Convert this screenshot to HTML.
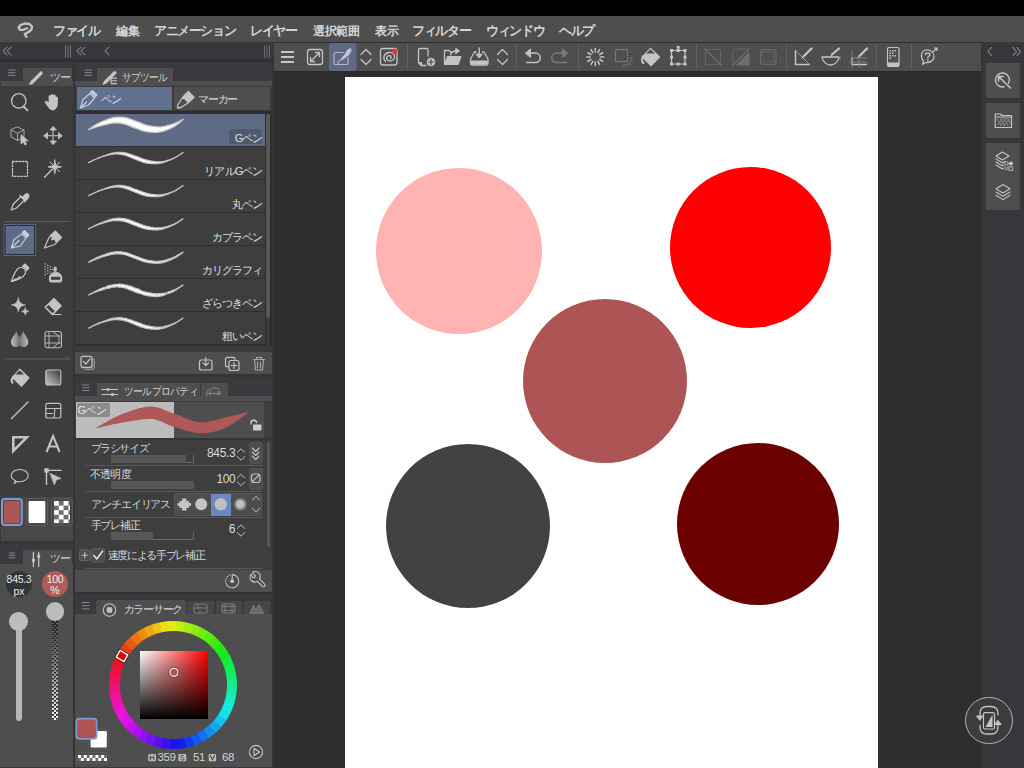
<!DOCTYPE html>
<html><head><meta charset="utf-8">
<style>
*{box-sizing:border-box;margin:0;padding:0}
html,body{width:1024px;height:768px;overflow:hidden;background:#2e2e2e;font-family:"Liberation Sans",sans-serif;color:#d4d4d4}
.a{position:absolute}
.t{position:absolute;white-space:nowrap;line-height:1}
.m{font-weight:bold}
svg{position:absolute;overflow:visible}
</style></head><body>
<!-- top black status -->
<div class="a" style="left:0;top:0;width:1024px;height:16px;background:#000"></div>
<!-- menubar -->
<div class="a" style="left:0;top:16px;width:1024px;height:26px;background:#4e4e4e"></div>
<!-- left column gutter -->
<div class="a" style="left:0;top:42px;width:274px;height:726px;background:#353538"></div><div class="a" style="left:0;top:42px;width:274px;height:17px;background:#38383c"></div>
<!-- toolbar -->
<div class="a" style="left:274px;top:43px;width:707px;height:28px;background:#4e4e4e"></div>
<!-- canvas area -->
<div class="a" style="left:274px;top:71px;width:707px;height:697px;background:#2e2e2e"></div><div class="a" style="left:272px;top:59px;width:2px;height:709px;background:#333337"></div><div class="a" style="left:274px;top:71px;width:707px;height:1px;background:#2a2a2a"></div>
<!-- right strip -->
<div class="a" style="left:981px;top:42px;width:43px;height:726px;background:#37363a"></div><div class="a" style="left:980px;top:71px;width:1px;height:697px;background:#2a2a2a"></div>
<!-- white canvas -->
<div class="a" style="left:345px;top:77px;width:533px;height:691px;background:#fff"></div>
<!-- circles -->
<div class="a" style="left:376px;top:168px;width:166px;height:166px;border-radius:50%;background:#ffb3b3"></div>
<div class="a" style="left:670px;top:167px;width:161px;height:161px;border-radius:50%;background:#ff0000"></div>
<div class="a" style="left:523px;top:299px;width:164px;height:164px;border-radius:50%;background:#ad5555"></div>
<div class="a" style="left:386px;top:444px;width:164px;height:164px;border-radius:50%;background:#424242"></div>
<div class="a" style="left:677px;top:443px;width:162px;height:162px;border-radius:50%;background:#6b0000"></div>


<!-- MENU -->
<svg class="a" style="left:0;top:0" width="1024" height="768" viewBox="0 0 1024 768">
<path d="M26.5,36.8 L24.7,34 L28.5,32 L31.5,29.5 L32,26.5 L29.5,24 L25,23.5 L20.5,25 L18.5,27.5 L20,29.8 L23.5,29.8 L27,28.2" fill="none" stroke="#c6c6c6" stroke-width="2.3" stroke-linecap="round" stroke-linejoin="round"/>
</svg>
<div class="t m" style="left:53px;top:25px;font-size:12.5px;letter-spacing:-1.3px">ファイル</div>
<div class="t m" style="left:116px;top:25px;font-size:12px;letter-spacing:-0.1px">編集</div>
<div class="t m" style="left:154px;top:25px;font-size:12.5px;letter-spacing:-1.4px">アニメーション</div>
<div class="t m" style="left:250px;top:25px;font-size:12.5px;letter-spacing:-1.3px">レイヤー</div>
<div class="t m" style="left:313px;top:25px;font-size:12px;letter-spacing:-0.5px">選択範囲</div>
<div class="t m" style="left:375px;top:25px;font-size:12px;letter-spacing:-0.5px">表示</div>
<div class="t m" style="left:412px;top:25px;font-size:12.5px;letter-spacing:-1.3px">フィルター</div>
<div class="t m" style="left:486px;top:25px;font-size:12.5px;letter-spacing:-1.3px">ウィンドウ</div>
<div class="t m" style="left:559px;top:25px;font-size:12.5px;letter-spacing:-1.3px">ヘルプ</div>


<!-- TOOLBAR ICONS -->
<svg class="a" style="left:0;top:0" width="1024" height="768" viewBox="0 0 1024 768" fill="none" stroke="#c4c4c4" stroke-width="1.4" stroke-linecap="round" stroke-linejoin="round">
<!-- header row left -->
<path d="M7,47 L3,51 L7,55 M11,47 L7,51 L11,55" stroke="#76767a" stroke-width="1.1"/>
<path d="M65.5,46 V57 M68,46 V57 M70.5,46 V57" stroke="#76767a" stroke-width="1"/>
<path d="M81,47 L77,51 L81,55 M85,47 L81,51 L85,55" stroke="#76767a" stroke-width="1.1"/>
<path d="M109,47 L105,51 L109,55" stroke="#76767a" stroke-width="1.1"/>
<path d="M264.5,46 V57 M267,46 V57 M269.5,46 V57" stroke="#6e6e72" stroke-width="1"/>
<!-- hamburger -->
<path d="M281,52 H294 M281,57 H294 M281,62 H294" stroke-width="2" stroke-linecap="butt"/>
<!-- expand -->
<rect x="307.5" y="49.5" width="15" height="15" rx="2.5" stroke-width="1.3"/>
<path d="M310.5,61.5 L319.5,52.5 M315.5,52.5 H319.5 V56.5 M310.5,57.5 V61.5 H314.5" stroke-width="1.3"/>
<!-- selected -->
<rect x="329" y="43" width="27.5" height="28" rx="3" fill="#5f6a87" stroke="none"/>
<path d="M343.5,52.5 H335.5 A1.5,1.5 0 0 0 334,54 V63 A1.5,1.5 0 0 0 335.5,64.5 H346.5 A1.5,1.5 0 0 0 348,63 V57.5" stroke-width="1.2" stroke="#b4b8c4"/>
<path d="M339.8,60.8 C341,58.5 343.2,56 344.6,54.5 C345.5,51.5 347.8,48.8 350.3,48.3 C351.6,48.3 351.8,49.8 351.2,51.5 C350.2,54 347.8,56.2 346,57.2 C344.2,58.8 342,60.3 339.8,60.8 Z" fill="#c4c6cc" stroke="none"/>
<path d="M340.2,60.5 C338.2,60.8 337.2,62.5 338.6,63.6" stroke="#b4b8c4" stroke-width="1.1"/>
<!-- up/down -->
<path d="M361,54.5 L366,49.5 L371,54.5 M361,59.5 L366,64.5 L371,59.5" stroke-width="1.3"/>
<path d="M497.5,54.5 L502.5,49.5 L507.5,54.5 M497.5,59.5 L502.5,64.5 L507.5,59.5" stroke-width="1.3"/>
<!-- spiral -->
<rect x="380.5" y="48.5" width="16.5" height="16.5" rx="2.5" stroke-width="1.3"/>
<path d="M385.5,61.5 C382.5,58.5 383.5,53.5 388.5,52.5 C392.5,51.8 395.5,54.5 394.5,57.8 C393.5,61 389,62 387,59.5 C385.8,57.8 387.3,55.5 389.7,55.7 C391.3,55.9 391.6,57.6 390.6,58.4" stroke-width="1.3"/>
<circle cx="394.6" cy="51" r="2.6" fill="#ee3333" stroke="none"/>
<!-- separators -->
<path d="M407.5,44 V70 M516.5,44 V70 M578.5,44 V70 M696.5,44 V70 M786.5,44 V70 M876.5,44 V70 M911.5,44 V70" stroke="#625c5c" stroke-width="1" stroke-linecap="butt"/>
<!-- new doc -->
<path d="M428,56 V50 A1.5,1.5 0 0 0 426.5,48.5 H420 A1.5,1.5 0 0 0 418.5,50 V62.5 L421.5,65.5 H426" stroke-width="1.3"/>
<path d="M418.5,62.5 H421.5 V65.5 Z" fill="#c4c4c4" stroke-width="1"/>
<circle cx="431" cy="62" r="4.3" fill="#c4c4c4" stroke="none"/>
<path d="M431,59.3 V64.7 M428.3,62 H433.7" stroke="#4e4e4e" stroke-width="1.2"/>
<!-- open folder -->
<path d="M444.5,64.5 V50.5 H449 L450.5,52 H452" stroke-width="1.3"/>
<path d="M444.5,64.5 L447.5,56.5 H461 L458,64.5 Z" fill="#c4c4c4" stroke-width="1.1"/>
<path d="M450.5,55 C451,51.5 453.5,51 457,51" stroke-width="1.3"/>
<path d="M456,48.5 L459.5,51 L456,53.5 Z" fill="#c4c4c4" stroke-width="1"/>
<!-- save -->
<path d="M474.5,52 L470.5,59 V63.5 A1.5,1.5 0 0 0 472,65 H486.5 A1.5,1.5 0 0 0 488,63.5 V59 L484,52 H482.5" stroke-width="1.3"/>
<path d="M476,52 H474.5" stroke-width="1.3"/>
<rect x="471" y="60.5" width="16.5" height="4" fill="#c4c4c4" stroke="none"/>
<path d="M479.2,48 V56.5" stroke-width="1.4"/>
<path d="M476.2,54.5 L479.2,58 L482.2,54.5 Z" fill="#c4c4c4" stroke-width="1"/>
<!-- undo -->
<path d="M528.5,53 H535.5 A4.8,4.8 0 0 1 535.5,62.6 H526.5" stroke-width="1.5"/>
<path d="M525.5,53 L530.5,49 V57 Z" fill="#c4c4c4" stroke-width="1"/>
<!-- redo -->
<path d="M563.5,53 H556.5 A4.8,4.8 0 0 0 556.5,62.6 H566.5" stroke="#7c7c7c" stroke-width="1.5"/>
<path d="M567.5,53 L562.5,49 V57 Z" fill="#7c7c7c" stroke="#7c7c7c" stroke-width="1"/>
<!-- spinner -->
<g stroke-width="1.5" transform="translate(595.3,57)">
<path d="M0,-5 V-8.5 M0,5 V8.5 M-5,0 H-8.5 M5,0 H8.5 M2.5,-4.33 L4.25,-7.36 M-2.5,4.33 L-4.25,7.36 M4.33,-2.5 L7.36,-4.25 M-4.33,2.5 L-7.36,4.25 M2.5,4.33 L4.25,7.36 M-2.5,-4.33 L-4.25,-7.36 M4.33,2.5 L7.36,4.25 M-4.33,-2.5 L-7.36,-4.25"/>
</g>
<!-- dotted selection -->
<rect x="615.5" y="49.5" width="12" height="12" rx="1" stroke="#7a7a7a" stroke-width="1.3" stroke-dasharray="1.5 1.5"/>
<g stroke="#7a7a7a" stroke-width="1.2" transform="translate(627,61)">
<path d="M0,3 V5 M3,0 H5 M2.1,2.1 L3.5,3.5 M-2.5,3.5 L-3.5,5 M3.5,-2.5 L5,-3.5"/>
</g>
<!-- fill bucket -->
<path d="M650.5,48.5 L659.5,57 L651,65.5 L642.5,57 Z" fill="#c4c4c4" stroke="#c4c4c4" stroke-width="1.5"/>
<path d="M646,53.5 L650.5,49.3 L655,53.5 Z" fill="#4e4e4e" stroke="none"/>
<path d="M643.5,56 C641.5,58 641.5,62 643.5,63" stroke-width="2"/>
<!-- transform -->
<rect x="671.5" y="50.5" width="13.5" height="13.5" stroke-width="1.2"/>
<path d="M678.2,50.5 V47" stroke-width="1.2"/>
<g fill="#c4c4c4" stroke="none">
<rect x="670" y="49" width="3" height="3"/><rect x="683.5" y="49" width="3" height="3"/><rect x="670" y="62.5" width="3" height="3"/><rect x="683.5" y="62.5" width="3" height="3"/>
<rect x="676.7" y="62.5" width="3" height="3"/><rect x="670" y="55.7" width="3" height="3"/><rect x="683.5" y="55.7" width="3" height="3"/><rect x="676.7" y="49" width="3" height="3"/><rect x="676.7" y="46" width="3" height="2.5"/>
</g>
<!-- diag dotted -->
<rect x="705.5" y="49.5" width="15" height="15" stroke="#6e6e6e" stroke-width="1.2" stroke-dasharray="1.5 1.8"/>
<path d="M704.5,48.5 L721,65" stroke="#6e6e6e" stroke-width="1.2"/>
<!-- tri dotted -->
<path d="M733,65 V49 H749" stroke="#6e6e6e" stroke-width="1.2" stroke-dasharray="1.5 1.8"/>
<path d="M749,49 L733,65 M749,53 V65 H737 Z" fill="#6e6e6e" stroke="#6e6e6e" stroke-width="1.1"/>
<!-- rounded dotted rect -->
<rect x="760.5" y="49.5" width="15.5" height="15" rx="3" stroke="#6a6a6a" stroke-width="1.2"/>
<rect x="763" y="52" width="10.5" height="10" stroke="#6a6a6a" stroke-width="1" stroke-dasharray="1 1.5"/>
<!-- ruler 1 -->
<path d="M795.5,50.5 V64.5 H809" stroke-width="1.5"/>
<path d="M795.5,50.5 L809,64" stroke="#9a9a9a" stroke-width="1"/>
<path d="M803.5,56.5 L811.5,48.5" stroke-width="2.3"/>
<path d="M801.5,58.5 L803.5,56.5" stroke-width="1"/>
<!-- ruler 2 -->
<path d="M822,57 H839 C838.5,62 834,65 830.5,65 C827,65 822.5,62 822,57 Z" stroke-width="1.3"/>
<path d="M832,54.5 L839,48.5" stroke-width="2.3"/>
<path d="M830,57 L832,54.5" stroke-width="1"/>
<path d="M840,57 V60" stroke="#8a8a8a" stroke-width="1"/>
<!-- ruler 3 -->
<path d="M852,58 V64.5 H866.5" stroke-width="1.5"/>
<path d="M852,58 H866.5 M849.5,62 H867 M852,51 V67 M859,58 V67" stroke="#888" stroke-width="0.8"/>
<path d="M859.5,56 L867,48.5" stroke-width="2.3"/>
<path d="M857.5,58 L859.5,56" stroke-width="1"/>
<!-- phone -->
<rect x="887.5" y="47.5" width="11.5" height="19" rx="1.5" stroke-width="1.2"/>
<rect x="887.5" y="62.5" width="11.5" height="4" fill="#c4c4c4" stroke="none"/>
<g fill="#c4c4c4" stroke="none">
<rect x="889.5" y="50" width="1.5" height="1.5"/><rect x="892" y="50" width="1.5" height="1.5"/><rect x="894.5" y="50" width="1.5" height="1.5"/>
<rect x="889.5" y="52.5" width="1.5" height="1.5"/><rect x="892" y="52.5" width="1.5" height="1.5"/>
<rect x="889.5" y="55" width="1.5" height="1.5"/><rect x="892" y="55" width="1.5" height="1.5"/><rect x="894.5" y="55" width="1.5" height="1.5"/>
<rect x="889.5" y="57.5" width="1.5" height="1.5"/>
</g>
<!-- help -->
<path d="M922.5,64.5 L923.5,61 C920,57 921,51 926,50 C930,49.5 934,52 934,56.5 C934,61 929.5,63 925.5,62.5 Z" stroke-width="1.2"/>
<path d="M925.5,54.5 C925.5,52.5 930,52.5 930,54.5 C930,56 927.8,56 927.8,58" stroke-width="1.4"/>
<circle cx="927.8" cy="60.3" r="0.9" fill="#c4c4c4" stroke="none"/>
<path d="M933,52 L937,48 M934.5,48 H937 V50.5" stroke-width="1.1"/>
<!-- right strip header -->
<path d="M991.5,47.5 L988,51.5 L991.5,55.5" stroke="#8a8a8e" stroke-width="1.1"/>
<path d="M1013,47.5 L1016.5,51.5 L1013,55.5 M1017,47.5 L1020.5,51.5 L1017,55.5" stroke="#8a8a8e" stroke-width="1.1"/>
</svg>

<!-- LEFT PANELS -->
<!-- dark band below header -->
<div class="a" style="left:0;top:59px;width:274px;height:3px;background:#303034"></div>
<!-- tool palette frame -->
<div class="a" style="left:0;top:62px;width:73px;height:479px;background:#3a3a3e"></div>
<div class="a" style="left:23px;top:68px;width:49px;height:14px;background:#4e4e4e"></div>
<div class="a" style="left:1px;top:81px;width:72px;height:5px;background:#4e4e4e"></div>
<div class="a" style="left:1px;top:86px;width:72px;height:455px;background:#3d3d3d"></div>

<!-- subtool frame -->
<div class="a" style="left:75px;top:62px;width:197px;height:312px;background:#3a3a3e"></div>
<div class="a" style="left:97px;top:68px;width:76px;height:14px;background:#4e4e4e"></div>
<div class="a" style="left:75px;top:81px;width:197px;height:5px;background:#4e4e4e"></div>
<div class="a" style="left:75px;top:86px;width:197px;height:266px;background:#3a3a3a"></div>
<div class="a" style="left:75px;top:352px;width:197px;height:22px;background:#4e4e4e"></div>

<!-- tool property frame -->
<div class="a" style="left:75px;top:377px;width:197px;height:215px;background:#3a3a3e"></div>
<div class="a" style="left:97px;top:383px;width:103px;height:14px;background:#4e4e4e"></div>
<div class="a" style="left:201px;top:383px;width:27px;height:14px;background:#4e4e4e"></div>
<div class="a" style="left:75px;top:396px;width:197px;height:5px;background:#4e4e4e"></div>
<div class="a" style="left:75px;top:401px;width:197px;height:169px;background:#3e3e3e"></div>
<div class="a" style="left:75px;top:570px;width:197px;height:22px;background:#4e4e4e"></div>

<!-- brush size frame -->
<div class="a" style="left:0;top:544px;width:73px;height:224px;background:#3a3a3e"></div>
<div class="a" style="left:23px;top:550px;width:49px;height:14px;background:#4e4e4e"></div>
<div class="a" style="left:0;top:564px;width:73px;height:204px;background:#4e4e4e"></div>

<!-- color frame -->
<div class="a" style="left:75px;top:594px;width:197px;height:174px;background:#3a3a3e"></div>
<div class="a" style="left:97px;top:600px;width:88px;height:14px;background:#4e4e4e"></div>
<div class="a" style="left:75px;top:614px;width:197px;height:154px;background:#4e4e4e"></div>


<!-- TOOL PALETTE CONTENT -->
<div class="a" style="left:1px;top:497px;width:72px;height:44px;background:#484848"></div>
<svg class="a" style="left:0;top:0" width="1024" height="768" viewBox="0 0 1024 768" fill="none" stroke="#c4c4c4" stroke-width="1.3" stroke-linecap="round" stroke-linejoin="round">
<!-- tab icons -->
<path d="M8.5,70 H15 M8.5,72.7 H15 M8.5,75.4 H15" stroke="#8e8e92" stroke-width="0.9"/>
<path d="M85,70 H91.5 M85,72.7 H91.5 M85,75.4 H91.5" stroke="#8e8e92" stroke-width="0.9"/>
<path d="M31,82 L30,84 L32,83.5 L42,73.5 L41,72 Z" fill="#c4c4c4" stroke="#c4c4c4" stroke-width="1.6"/>
<path d="M105.2,82.2 L114.8,72.8" stroke="#c4c4c4" stroke-width="3.4" stroke-linecap="round"/>
<path d="M103.6,83.8 L104.6,82.8" stroke="#c4c4c4" stroke-width="1.8"/>
<path d="M111,78.1 H117 M111,80.8 H117 M111,83.6 H117 M111,77.5 V83.6" stroke-width="1.1" stroke-linecap="butt"/>
<!-- separators -->
<path d="M5,221.5 H70 M5,358.8 H70" stroke="#5c5c5c" stroke-width="1.2"/>
<!-- magnifier -->
<circle cx="18.8" cy="100.9" r="7.2" stroke-width="1.3"/>
<path d="M23.5,106.5 L27.5,110.3" stroke-width="1.8"/>
<!-- hand -->
<path d="M47,105 C45.5,103.5 44.5,102 45.5,101.3 C46.5,100.8 48,102 49,103 V96.5 C49,95 51,95 51,96.5 V101 V95.5 C51,94 53.2,94 53.2,95.5 V101 V96 C53.2,94.5 55.4,94.5 55.4,96 V101.5 V98 C55.4,96.5 57.5,96.5 57.5,98 V102 C57.5,106 56.5,110 52.5,110 C50,110 48.5,107 47,105 Z" fill="#c4c4c4" stroke="#c4c4c4" stroke-width="0.8"/>
<!-- cube -->
<path d="M17.5,127 L24,130 V137 L17.5,140.5 L11,137 V130 Z M11,130 L17.5,133.3 L24,130 M17.5,133.3 V140.5" stroke="#a8a8a8" stroke-width="1"/>
<path d="M21,135 L21,144 L23.2,141.8 L25,145 L26.5,144.2 L24.8,141 L27.8,140.8 Z" fill="#c4c4c4" stroke="#c4c4c4" stroke-width="0.8"/>
<!-- move -->
<path d="M53,128.5 V143 M45.5,135.6 H60.5" stroke="#a8a8a8" stroke-width="1.4"/>
<path d="M53,126.5 L50,130 H56 Z M53,144.5 L50,141 H56 Z M44,135.6 L47.5,132.6 V138.6 Z M62,135.6 L58.5,132.6 V138.6 Z" fill="#c4c4c4" stroke="#c4c4c4" stroke-width="0.8"/>
<!-- dotted rect -->
<rect x="12.5" y="161.5" width="15" height="14.8" stroke-width="1.3" stroke-dasharray="1.6 1.6"/>
<!-- magic wand -->
<path d="M44.5,177.2 L51.5,170" stroke-width="1.3"/>
<path d="M54.8,160 L55.8,165.5 L61.5,166.9 L55.8,168.3 L54.8,173.8 L53.8,168.3 L48,166.9 L53.8,165.5 Z" fill="#c4c4c4" stroke="#c4c4c4" stroke-width="0.8"/>
<path d="M50,162 L59.6,171.8 M59.6,162 L50,171.8" stroke-width="1"/>
<!-- eyedropper -->
<path d="M11.3,210 L13,204.5 L21,196.5 L24.5,200 L16.5,208 Z" stroke-width="1.2"/>
<path d="M20,195.5 L25.5,201 M22.3,197.8 L25.5,194.5 C26.5,193.5 28.5,194 28.5,195.5 C28.8,196.5 28.5,197.5 27.5,198.5 L24.3,201.8" fill="#c4c4c4" stroke="#c4c4c4" stroke-width="1.6"/>
<!-- selected pen button -->
<rect x="4.5" y="224.5" width="31" height="31" fill="#5f6a87" stroke="#56648a" stroke-width="1"/>
<rect x="5.5" y="225.5" width="29" height="29" stroke="#2a2c34" stroke-width="1"/>
<path d="M11.3,248 L14,239.5 L22,234 L26,238 L20.5,246 Z M11.3,248 L19,240.5" stroke="#c8ccd6" stroke-width="1.2"/>
<path d="M22.5,232.5 L24.5,230.8 L28.8,235 L27,237 Z" fill="#c8ccd6" stroke="#c8ccd6" stroke-width="1.5"/>
<!-- marker -->
<path d="M44.5,248 L48.5,238.5 L55,232 L61,238 L54.5,244.5 Z" stroke-width="1.2"/>
<path d="M55.5,231 L61.8,237.2 L56,242 L54.5,239 L51.5,240 L52.5,237 L50,236 Z" fill="#c4c4c4" stroke="#c4c4c4" stroke-width="1"/>
<!-- pencil brush -->
<path d="M11.3,281.5 C13,277 14.5,272 17.5,269 C20,267 23,267.5 24.5,269 C26,271 25.5,274 23.5,276 C20.5,279 16,280.5 11.3,281.5 Z" stroke-width="1.2"/>
<path d="M11.3,281.5 C14,279 16,278.5 18,278.5 L19,276.5 L20.5,277 C17,280 14,281 11.3,281.5 Z" fill="#c4c4c4" stroke="#c4c4c4" stroke-width="0.8"/>
<path d="M23,266.5 L25,264.5 L28.5,268 L26.5,270" fill="#c4c4c4" stroke="#c4c4c4" stroke-width="1.8"/>
<!-- airbrush -->
<g fill="#c4c4c4" stroke="none">
<circle cx="45.2" cy="264" r="0.7"/><circle cx="45.2" cy="266.7" r="0.7"/><circle cx="45.2" cy="269.4" r="0.7"/><circle cx="45.2" cy="272.1" r="0.7"/><circle cx="45.2" cy="274.8" r="0.7"/>
<circle cx="47.8" cy="265.3" r="0.7"/><circle cx="47.8" cy="268" r="0.7"/><circle cx="47.8" cy="270.7" r="0.7"/><circle cx="47.8" cy="273.4" r="0.7"/>
<circle cx="50.4" cy="266.7" r="0.7"/><circle cx="50.4" cy="269.4" r="0.7"/><circle cx="50.4" cy="272.1" r="0.7"/>
<circle cx="52.6" cy="269.4" r="0.7"/>
<rect x="53.7" y="266.8" width="3" height="5" rx="0.8"/>
</g>
<path d="M49.5,280.5 V278 C49.5,274.5 52,272.5 55.6,272.5 C59.2,272.5 61.7,274.5 61.7,278 V280.5 C61.7,281.5 61,282 60,282 H51 C50,282 49.5,281.5 49.5,280.5 Z" fill="#c4c4c4" stroke="#c4c4c4" stroke-width="1"/>
<rect x="51" y="276.8" width="9.2" height="3" fill="#404040" stroke="none"/>
<!-- sparkle -->
<path d="M18.3,297.6 Q18.9,304.3 25.5,304.9 Q18.9,305.5 18.3,312 Q17.7,305.5 11.2,304.9 Q17.7,304.3 18.3,297.6 Z" fill="#c4c4c4" stroke="#c4c4c4" stroke-width="0.5"/>
<path d="M25.2,307.6 Q25.5,311.1 29,311.4 Q25.5,311.7 25.2,315.2 Q24.9,311.7 21.4,311.4 Q24.9,311.1 25.2,307.6 Z" fill="#c4c4c4" stroke="#c4c4c4" stroke-width="0.5"/>
<!-- eraser -->
<path d="M54,298.5 L61.3,305.8 L52.5,314.5 L45.2,307.2 Z" fill="#c4c4c4" stroke="#c4c4c4" stroke-width="1.2"/>
<path d="M46.5,306 L53.5,313 L52.5,314.5 H54 M52.5,314.5 H61" stroke="#c4c4c4" stroke-width="1.2"/>
<path d="M48.5,304 L55.5,311 L52.5,313.5 L45.8,307 Z" fill="#404040" stroke="none"/>
<path d="M45.2,307.2 L48.5,304 L55.5,311 L52.5,314.5 Z" stroke="#c4c4c4" stroke-width="1.2"/>
<!-- blend drops -->
<defs><linearGradient id="gd" x1="0" x2="1" y1="0" y2="0"><stop offset="0" stop-color="#c0c0c0"/><stop offset="0.5" stop-color="#707070"/><stop offset="1" stop-color="#c0c0c0"/></linearGradient>
<linearGradient id="gs" x1="1" y1="0" x2="0" y2="1"><stop offset="0" stop-color="#353535"/><stop offset="1" stop-color="#c8c8c8"/></linearGradient></defs>
<path d="M16.3,331.5 C14.5,335 11,338.5 11,342 C11,345 13.2,347 16,347 C17.5,347 18.8,346.3 19.5,345.5 C20.3,346.3 21.5,347 23,347 C26,347 28.3,345 28.3,342 C28.3,338.5 25,335 23.2,331.5 C22,334 20.5,336 19.7,337.5 C19,336 17.5,334 16.3,331.5 Z" fill="url(#gd)" stroke="none"/>
<!-- grid perspective -->
<rect x="45" y="331.5" width="16.5" height="16.3" rx="2.5" stroke="#b4b4b4" stroke-width="1.1"/>
<path d="M49,331.5 V347.8 M45,336 H61.5 M45,343 H61.5 M52.5,331.5 L59,336 V343 L52.5,347.8" stroke="#b4b4b4" stroke-width="1"/>
<!-- fill bucket -->
<path d="M19.7,369.5 L28.5,377.8 L21.5,385.8 L13,377.5 Z" fill="#c4c4c4" stroke="#c4c4c4" stroke-width="1.8"/>
<path d="M15.3,374.5 L19.7,370.3 L24,374.5 Z" fill="#404040" stroke="none"/>
<path d="M14,376 C11.5,378.5 11,381.5 12.5,382.5" stroke-width="2.2"/>
<!-- gradient square -->
<rect x="45.8" y="370" width="15" height="15" rx="2" fill="url(#gs)" stroke="#c4c4c4" stroke-width="1.1"/>
<!-- line -->
<path d="M11.5,418.5 L28,402" stroke-width="1.3"/>
<!-- frame -->
<rect x="45.8" y="403.3" width="15" height="14.7" rx="2" stroke-width="1.2"/>
<path d="M45.8,408.5 H60.8 M45.8,413.5 H52.5 M55,408.5 L54,418" stroke-width="1.1"/>
<!-- triangle ruler -->
<path d="M13.3,437.3 H26.8 L13.3,450.8 Z" stroke-width="2.6" stroke-linejoin="miter"/>
<!-- A -->
<path d="M46.6,452 L53.1,436 L59.6,452 M48.9,446.5 H57.3" stroke-width="2" stroke-linecap="butt" stroke-linejoin="miter"/>
<!-- balloon -->
<path d="M14.2,483.5 L15.5,480.8 C12.7,479.5 11.2,477.5 11.2,475.6 C11.2,472.2 15,469.5 19.7,469.5 C24.4,469.5 28.2,472.2 28.2,475.6 C28.2,479 24.4,481.7 19.7,481.7 C18.5,481.7 17.5,481.6 16.8,481.5 Z" stroke-width="1.1"/>
<!-- object -->
<rect x="44.3" y="468.2" width="4.4" height="4.4" fill="#c4c4c4" stroke="none"/>
<path d="M48.5,470.4 H61 M46.5,472.5 V484.5" stroke-width="1.4"/>
<path d="M50.3,473.5 L61,478.5 L56.5,479.5 L54.5,484.5 Z" fill="#c4c4c4" stroke="#c4c4c4" stroke-width="0.8"/>
<!-- color swatches -->
<rect x="2" y="499" width="19.7" height="26" rx="3" stroke="#7d9bd6" stroke-width="2"/>
<rect x="4" y="501" width="15.8" height="22.3" rx="1" fill="#ad5555" stroke="none"/>
<rect x="26.5" y="498.5" width="21" height="27" rx="3" stroke="#5c5858" stroke-width="1"/>
<rect x="28.6" y="501" width="16.7" height="22" rx="1" fill="#ffffff" stroke="none"/>
<rect x="51.5" y="498.5" width="21" height="27" rx="3" stroke="#5c5858" stroke-width="1"/>
</svg>
<svg class="a" style="left:0;top:0" width="1024" height="768"><defs><clipPath id="ckc"><rect x="54" y="501" width="16" height="22.3" rx="1"/></clipPath></defs><g clip-path="url(#ckc)"><rect x="54" y="501" width="16" height="22.3" fill="#fff"/><g fill="#6e6e6e"><rect x="58.8" y="501.0" width="4.8" height="4.6"/><rect x="68.4" y="501.0" width="4.8" height="4.6"/><rect x="54.0" y="505.6" width="4.8" height="4.6"/><rect x="63.6" y="505.6" width="4.8" height="4.6"/><rect x="58.8" y="510.2" width="4.8" height="4.6"/><rect x="68.4" y="510.2" width="4.8" height="4.6"/><rect x="54.0" y="514.8" width="4.8" height="4.6"/><rect x="63.6" y="514.8" width="4.8" height="4.6"/><rect x="58.8" y="519.4" width="4.8" height="4.6"/><rect x="68.4" y="519.4" width="4.8" height="4.6"/></g></g></svg>


<!-- SUBTOOL CONTENT -->
<div class="a" style="left:76px;top:111px;width:196px;height:241px;background:#2e2e2e"></div>
<div class="a" style="left:76.5px;top:87.4px;width:95.5px;height:22.5px;background:#627090"></div>
<div class="a" style="left:173.6px;top:87.4px;width:96.4px;height:22.5px;background:#4e4e4e"></div>
<div class="a" style="left:76px;top:346px;width:196px;height:6px;background:#3a3a3a"></div>
<div class="a" style="left:266px;top:113.5px;width:4.3px;height:232px;background:#3a3a3a"></div>
<div class="a" style="left:266px;top:113.5px;width:4.3px;height:204px;border-radius:2px;background:#585858"></div>
<div class="a" style="left:76px;top:113.5px;width:188.5px;height:32.3px;background:#5f6a85"></div>
<div class="a" style="left:76px;top:146.6px;width:188.5px;height:32.3px;background:#3e3e3e"></div>
<div class="a" style="left:76px;top:179.7px;width:188.5px;height:32.3px;background:#3e3e3e"></div>
<div class="a" style="left:76px;top:212.8px;width:188.5px;height:32.3px;background:#3e3e3e"></div>
<div class="a" style="left:76px;top:245.9px;width:188.5px;height:32.3px;background:#3e3e3e"></div>
<div class="a" style="left:76px;top:279.0px;width:188.5px;height:32.3px;background:#3e3e3e"></div>
<div class="a" style="left:76px;top:312.1px;width:188.5px;height:32.3px;background:#3e3e3e"></div>
<div class="a" style="left:229.3px;top:129px;width:33.2px;height:14.6px;border-radius:3px;background:#4f5a70"></div>
<div class="t" style="right:761.5px;top:132.5px;font-size:11px;letter-spacing:-0.9px;color:#e0e0e0">Gペン</div>
<div class="t" style="right:761.5px;top:165.6px;font-size:11px;letter-spacing:-0.9px;color:#e0e0e0">リアルGペン</div>
<div class="t" style="right:761.5px;top:198.7px;font-size:11px;letter-spacing:-0.9px;color:#e0e0e0">丸ペン</div>
<div class="t" style="right:761.5px;top:231.8px;font-size:11px;letter-spacing:-0.9px;color:#e0e0e0">カブラペン</div>
<div class="t" style="right:761.5px;top:264.9px;font-size:11px;letter-spacing:-0.9px;color:#e0e0e0">カリグラフィ</div>
<div class="t" style="right:761.5px;top:298.0px;font-size:11px;letter-spacing:-0.9px;color:#e0e0e0">ざらつきペン</div>
<div class="t" style="right:761.5px;top:331.1px;font-size:11px;letter-spacing:-0.9px;color:#e0e0e0">粗いペン</div>

<div class="t" style="left:122px;top:71.5px;font-size:11px;letter-spacing:-0.8px;color:#d4d4d4;transform:scaleX(0.88);transform-origin:0 0">サブツール</div>
<div class="t" style="left:101px;top:94px;font-size:11px;letter-spacing:-1.5px;color:#dde0e8">ペン</div>
<div class="t" style="left:198px;top:94px;font-size:11px;letter-spacing:-1.2px;color:#d8d8d8">マーカー</div>
<svg class="a" style="left:0;top:0" width="1024" height="768" viewBox="0 0 1024 768" fill="none" stroke="#c4c4c4" stroke-width="1.3" stroke-linecap="round" stroke-linejoin="round">
<path d="M88.6,129.5 L89.2,129.4 L89.8,129.2 L90.6,129.0 L91.5,128.7 L92.4,128.4 L93.4,128.0 L94.4,127.7 L95.4,127.3 L96.5,127.0 L97.6,126.6 L98.7,126.3 L99.7,126.0 L100.8,125.8 L102.0,125.5 L103.2,125.2 L104.4,124.9 L105.7,124.6 L107.0,124.3 L108.2,124.0 L109.5,123.7 L110.7,123.5 L111.8,123.3 L112.9,123.2 L113.9,123.1 L114.9,123.0 L115.8,123.0 L116.6,123.0 L117.5,123.0 L118.3,123.0 L119.1,123.1 L119.9,123.2 L120.7,123.3 L121.5,123.4 L122.3,123.6 L123.1,123.8 L124.0,124.0 L124.8,124.2 L125.6,124.4 L126.4,124.7 L127.2,125.0 L128.1,125.3 L129.0,125.7 L129.9,126.0 L130.8,126.4 L131.8,126.8 L132.7,127.2 L133.7,127.6 L134.7,127.9 L135.6,128.2 L136.4,128.5 L137.3,128.9 L138.2,129.2 L139.1,129.6 L140.1,129.9 L141.1,130.3 L142.1,130.6 L143.1,130.9 L144.2,131.2 L145.3,131.5 L146.4,131.7 L147.5,131.8 L148.6,132.0 L149.7,132.1 L150.9,132.2 L152.0,132.3 L153.2,132.4 L154.4,132.4 L155.6,132.4 L156.9,132.4 L158.1,132.3 L159.3,132.1 L160.5,131.9 L161.7,131.7 L162.9,131.4 L164.1,131.0 L165.3,130.6 L166.5,130.2 L167.7,129.7 L168.8,129.2 L169.9,128.7 L171.0,128.2 L172.0,127.7 L173.0,127.1 L174.0,126.6 L174.9,126.0 L175.9,125.4 L176.8,124.8 L177.7,124.1 L178.6,123.4 L179.4,122.8 L180.2,122.1 L180.9,121.5 L181.6,120.9 L182.1,120.4 L182.6,119.9 L183.0,119.5 L183.0,119.5 L182.5,119.7 L181.8,119.9 L181.1,120.3 L180.4,120.6 L179.5,121.1 L178.6,121.5 L177.7,122.0 L176.7,122.4 L175.7,122.9 L174.7,123.3 L173.8,123.7 L172.8,124.0 L171.8,124.3 L170.8,124.6 L169.7,124.9 L168.6,125.3 L167.5,125.5 L166.4,125.8 L165.3,126.1 L164.1,126.3 L163.0,126.5 L162.0,126.7 L160.9,126.8 L159.9,126.9 L158.9,126.9 L157.9,126.9 L156.8,126.8 L155.8,126.7 L154.8,126.6 L153.7,126.5 L152.7,126.3 L151.6,126.2 L150.6,126.0 L149.6,125.8 L148.6,125.6 L147.6,125.3 L146.7,125.1 L145.9,124.9 L145.0,124.6 L144.2,124.3 L143.3,124.0 L142.5,123.6 L141.6,123.3 L140.7,122.9 L139.8,122.6 L138.9,122.2 L137.9,121.8 L136.9,121.5 L136.0,121.2 L135.1,120.8 L134.2,120.5 L133.3,120.1 L132.4,119.8 L131.4,119.4 L130.4,119.1 L129.4,118.7 L128.4,118.4 L127.4,118.1 L126.3,117.8 L125.2,117.6 L124.2,117.5 L123.3,117.4 L122.3,117.2 L121.3,117.2 L120.4,117.1 L119.4,117.1 L118.4,117.1 L117.4,117.1 L116.4,117.2 L115.3,117.3 L114.2,117.5 L113.1,117.7 L111.9,118.0 L110.7,118.3 L109.5,118.7 L108.2,119.1 L106.9,119.6 L105.7,120.1 L104.4,120.6 L103.2,121.1 L102.0,121.6 L100.8,122.2 L99.7,122.7 L98.7,123.2 L97.6,123.7 L96.6,124.2 L95.6,124.8 L94.6,125.4 L93.6,126.0 L92.7,126.6 L91.8,127.2 L91.0,127.7 L90.2,128.2 L89.6,128.7 L89.0,129.1 L88.6,129.5 Z" fill="#ffffff"/>
<path d="M88.6,162.6 L89.1,162.4 L89.7,162.1 L90.4,161.7 L91.2,161.3 L92.1,160.9 L93.0,160.4 L94.0,160.0 L95.0,159.5 L96.1,159.0 L97.1,158.6 L98.2,158.2 L99.2,157.8 L100.3,157.4 L101.4,157.0 L102.6,156.6 L103.9,156.3 L105.1,155.9 L106.4,155.5 L107.7,155.2 L108.9,154.9 L110.2,154.6 L111.4,154.4 L112.5,154.2 L113.6,154.1 L114.6,154.0 L115.6,153.9 L116.5,153.9 L117.4,153.9 L118.3,154.0 L119.2,154.0 L120.1,154.1 L120.9,154.3 L121.8,154.4 L122.6,154.6 L123.5,154.8 L124.4,155.0 L125.3,155.2 L126.1,155.5 L127.0,155.8 L127.9,156.1 L128.8,156.5 L129.7,156.9 L130.6,157.3 L131.6,157.7 L132.5,158.1 L133.4,158.4 L134.4,158.8 L135.3,159.2 L136.2,159.5 L137.1,159.9 L138.0,160.2 L138.9,160.6 L139.8,160.9 L140.7,161.3 L141.7,161.6 L142.6,162.0 L143.6,162.3 L144.6,162.5 L145.7,162.8 L146.7,163.0 L147.8,163.1 L148.9,163.3 L150.0,163.4 L151.1,163.5 L152.2,163.6 L153.4,163.6 L154.5,163.7 L155.7,163.6 L156.9,163.6 L158.0,163.5 L159.2,163.4 L160.3,163.2 L161.4,163.0 L162.6,162.7 L163.7,162.4 L164.9,162.0 L166.0,161.6 L167.1,161.2 L168.2,160.7 L169.3,160.3 L170.4,159.8 L171.5,159.4 L172.5,158.9 L173.4,158.5 L174.4,158.0 L175.3,157.5 L176.3,157.0 L177.2,156.4 L178.2,155.8 L179.0,155.3 L179.9,154.7 L180.7,154.2 L181.4,153.7 L182.0,153.3 L182.6,152.9 L183.0,152.6 L183.0,152.6 L182.5,152.9 L182.0,153.2 L181.3,153.7 L180.6,154.1 L179.8,154.7 L179.0,155.2 L178.1,155.8 L177.2,156.4 L176.3,156.9 L175.3,157.4 L174.3,157.9 L173.4,158.3 L172.4,158.7 L171.4,159.1 L170.3,159.5 L169.2,159.9 L168.1,160.2 L166.9,160.6 L165.8,160.9 L164.6,161.1 L163.5,161.4 L162.3,161.6 L161.2,161.7 L160.1,161.8 L159.0,161.8 L157.9,161.8 L156.9,161.8 L155.8,161.7 L154.7,161.6 L153.6,161.4 L152.5,161.3 L151.4,161.1 L150.3,160.9 L149.3,160.7 L148.3,160.5 L147.3,160.2 L146.3,160.0 L145.4,159.7 L144.5,159.5 L143.6,159.1 L142.7,158.8 L141.8,158.5 L140.9,158.1 L140.0,157.8 L139.1,157.4 L138.2,157.1 L137.2,156.7 L136.3,156.4 L135.4,156.1 L134.4,155.8 L133.5,155.4 L132.6,155.1 L131.6,154.8 L130.7,154.4 L129.7,154.1 L128.7,153.8 L127.8,153.5 L126.8,153.2 L125.8,153.0 L124.8,152.8 L123.9,152.7 L122.9,152.6 L122.0,152.5 L121.1,152.4 L120.2,152.4 L119.3,152.4 L118.4,152.4 L117.4,152.4 L116.5,152.5 L115.5,152.6 L114.5,152.8 L113.4,152.9 L112.3,153.2 L111.2,153.5 L110.0,153.8 L108.7,154.2 L107.5,154.6 L106.2,155.0 L105.0,155.5 L103.8,155.9 L102.5,156.4 L101.4,156.8 L100.2,157.2 L99.2,157.6 L98.1,158.0 L97.1,158.5 L96.0,159.0 L95.0,159.4 L94.0,159.9 L93.0,160.4 L92.1,160.8 L91.2,161.3 L90.4,161.7 L89.7,162.0 L89.1,162.3 L88.6,162.6 Z" fill="#ffffff"/>
<path d="M88.6,195.7 L89.1,195.5 L89.7,195.2 L90.4,194.8 L91.2,194.4 L92.1,194.0 L93.0,193.5 L94.0,193.1 L95.0,192.6 L96.1,192.1 L97.1,191.7 L98.2,191.3 L99.2,190.9 L100.3,190.5 L101.5,190.1 L102.6,189.7 L103.9,189.4 L105.1,189.0 L106.4,188.6 L107.7,188.3 L108.9,188.0 L110.2,187.7 L111.4,187.5 L112.5,187.3 L113.6,187.2 L114.6,187.1 L115.6,187.0 L116.5,187.0 L117.4,187.0 L118.3,187.0 L119.2,187.1 L120.1,187.2 L120.9,187.3 L121.8,187.5 L122.6,187.6 L123.5,187.8 L124.4,188.0 L125.3,188.3 L126.2,188.5 L127.0,188.8 L127.9,189.2 L128.8,189.5 L129.7,189.9 L130.7,190.3 L131.6,190.7 L132.5,191.1 L133.5,191.5 L134.4,191.8 L135.3,192.2 L136.3,192.5 L137.1,192.9 L138.0,193.2 L138.9,193.6 L139.9,193.9 L140.8,194.3 L141.7,194.6 L142.7,195.0 L143.7,195.3 L144.7,195.5 L145.7,195.8 L146.7,196.0 L147.8,196.1 L148.9,196.3 L150.0,196.4 L151.1,196.5 L152.2,196.6 L153.4,196.7 L154.5,196.7 L155.7,196.7 L156.9,196.7 L158.0,196.6 L159.2,196.5 L160.3,196.3 L161.4,196.1 L162.6,195.8 L163.7,195.5 L164.9,195.1 L166.0,194.7 L167.1,194.3 L168.3,193.9 L169.4,193.4 L170.4,193.0 L171.5,192.5 L172.5,192.0 L173.4,191.6 L174.4,191.1 L175.4,190.6 L176.3,190.1 L177.2,189.5 L178.2,188.9 L179.0,188.4 L179.9,187.8 L180.7,187.3 L181.4,186.8 L182.0,186.4 L182.6,186.0 L183.0,185.7 L183.0,185.7 L182.5,186.0 L182.0,186.3 L181.3,186.8 L180.6,187.2 L179.8,187.8 L179.0,188.3 L178.1,188.9 L177.2,189.4 L176.3,190.0 L175.3,190.5 L174.3,191.0 L173.4,191.4 L172.4,191.8 L171.3,192.2 L170.3,192.6 L169.2,192.9 L168.1,193.3 L166.9,193.6 L165.8,194.0 L164.6,194.2 L163.5,194.5 L162.3,194.7 L161.2,194.8 L160.1,194.9 L159.0,195.0 L157.9,195.0 L156.9,194.9 L155.8,194.8 L154.7,194.7 L153.6,194.6 L152.5,194.4 L151.4,194.3 L150.3,194.1 L149.3,193.9 L148.3,193.6 L147.3,193.4 L146.3,193.2 L145.4,192.9 L144.5,192.6 L143.6,192.3 L142.7,192.0 L141.8,191.7 L140.9,191.3 L140.0,191.0 L139.1,190.6 L138.1,190.3 L137.2,189.9 L136.3,189.6 L135.3,189.3 L134.4,189.0 L133.5,188.6 L132.5,188.3 L131.6,187.9 L130.6,187.6 L129.7,187.2 L128.7,186.9 L127.7,186.6 L126.8,186.4 L125.8,186.1 L124.8,186.0 L123.9,185.8 L122.9,185.7 L122.0,185.6 L121.1,185.5 L120.2,185.5 L119.3,185.5 L118.4,185.5 L117.4,185.5 L116.5,185.6 L115.5,185.7 L114.5,185.9 L113.4,186.0 L112.3,186.3 L111.2,186.6 L110.0,186.9 L108.7,187.3 L107.5,187.7 L106.2,188.1 L105.0,188.5 L103.7,189.0 L102.5,189.4 L101.4,189.9 L100.2,190.3 L99.2,190.7 L98.1,191.1 L97.1,191.6 L96.0,192.1 L95.0,192.5 L94.0,193.0 L93.0,193.5 L92.1,193.9 L91.2,194.4 L90.4,194.8 L89.7,195.1 L89.1,195.4 L88.6,195.7 Z" fill="#ffffff"/>
<path d="M88.6,228.8 L89.1,228.6 L89.7,228.3 L90.4,227.9 L91.2,227.5 L92.1,227.1 L93.0,226.7 L94.0,226.2 L95.1,225.8 L96.1,225.3 L97.2,224.9 L98.2,224.5 L99.3,224.2 L100.4,223.8 L101.5,223.5 L102.7,223.1 L104.0,222.7 L105.2,222.4 L106.5,222.0 L107.8,221.7 L109.0,221.4 L110.2,221.1 L111.4,220.9 L112.6,220.7 L113.6,220.6 L114.7,220.5 L115.6,220.5 L116.6,220.4 L117.5,220.5 L118.3,220.5 L119.2,220.6 L120.0,220.6 L120.9,220.8 L121.7,220.9 L122.6,221.0 L123.5,221.2 L124.3,221.4 L125.2,221.6 L126.1,221.9 L127.0,222.2 L127.9,222.5 L128.8,222.8 L129.7,223.2 L130.6,223.6 L131.5,224.0 L132.5,224.3 L133.4,224.7 L134.4,225.1 L135.3,225.4 L136.2,225.7 L137.1,226.1 L138.0,226.4 L138.9,226.8 L139.8,227.1 L140.8,227.5 L141.7,227.8 L142.7,228.1 L143.6,228.4 L144.7,228.7 L145.7,228.9 L146.7,229.1 L147.8,229.3 L148.9,229.4 L150.0,229.6 L151.1,229.7 L152.2,229.8 L153.4,229.9 L154.5,229.9 L155.7,229.9 L156.9,229.9 L158.0,229.8 L159.2,229.7 L160.3,229.5 L161.4,229.3 L162.6,229.0 L163.7,228.7 L164.9,228.4 L166.0,228.0 L167.2,227.5 L168.3,227.1 L169.4,226.7 L170.5,226.2 L171.5,225.7 L172.5,225.3 L173.5,224.8 L174.4,224.3 L175.4,223.8 L176.3,223.3 L177.3,222.7 L178.2,222.1 L179.1,221.5 L179.9,220.9 L180.7,220.4 L181.4,219.9 L182.0,219.5 L182.6,219.1 L183.0,218.8 L183.0,218.8 L182.5,219.1 L182.0,219.4 L181.3,219.9 L180.6,220.3 L179.8,220.9 L179.0,221.4 L178.1,221.9 L177.2,222.5 L176.2,223.0 L175.2,223.5 L174.3,224.0 L173.3,224.4 L172.3,224.8 L171.3,225.1 L170.2,225.5 L169.1,225.9 L168.0,226.3 L166.9,226.6 L165.7,226.9 L164.6,227.2 L163.4,227.4 L162.3,227.6 L161.2,227.8 L160.1,227.9 L159.0,227.9 L157.9,227.9 L156.9,227.9 L155.8,227.9 L154.7,227.8 L153.6,227.6 L152.5,227.5 L151.4,227.3 L150.3,227.1 L149.3,226.9 L148.3,226.7 L147.3,226.5 L146.3,226.3 L145.4,226.0 L144.5,225.7 L143.6,225.4 L142.7,225.1 L141.8,224.7 L140.9,224.4 L140.0,224.0 L139.1,223.6 L138.2,223.3 L137.2,222.9 L136.3,222.6 L135.4,222.3 L134.5,221.9 L133.5,221.6 L132.6,221.2 L131.7,220.8 L130.7,220.5 L129.8,220.1 L128.8,219.8 L127.8,219.5 L126.8,219.2 L125.8,219.0 L124.9,218.8 L123.9,218.6 L123.0,218.5 L122.1,218.4 L121.1,218.3 L120.2,218.3 L119.3,218.2 L118.4,218.2 L117.4,218.3 L116.4,218.3 L115.4,218.5 L114.4,218.6 L113.4,218.8 L112.2,219.0 L111.1,219.3 L109.9,219.7 L108.6,220.1 L107.4,220.5 L106.1,220.9 L104.9,221.4 L103.7,221.8 L102.5,222.3 L101.3,222.8 L100.2,223.2 L99.1,223.6 L98.1,224.1 L97.0,224.6 L96.0,225.0 L94.9,225.5 L93.9,226.1 L93.0,226.6 L92.1,227.0 L91.2,227.5 L90.4,227.9 L89.7,228.2 L89.1,228.5 L88.6,228.8 Z" fill="#ffffff"/>
<path d="M88.6,262.2 L89.1,262.0 L89.8,261.8 L90.5,261.5 L91.3,261.1 L92.2,260.7 L93.2,260.3 L94.2,259.9 L95.2,259.5 L96.2,259.0 L97.3,258.6 L98.4,258.2 L99.4,257.8 L100.5,257.5 L101.6,257.1 L102.8,256.7 L104.0,256.4 L105.3,256.0 L106.5,255.6 L107.8,255.3 L109.1,254.9 L110.3,254.6 L111.4,254.4 L112.6,254.2 L113.6,254.0 L114.6,253.9 L115.6,253.8 L116.5,253.8 L117.4,253.7 L118.3,253.8 L119.2,253.8 L120.0,253.9 L120.9,254.0 L121.8,254.1 L122.6,254.2 L123.5,254.4 L124.4,254.5 L125.3,254.7 L126.2,255.0 L127.1,255.3 L128.0,255.6 L128.9,255.9 L129.8,256.3 L130.7,256.6 L131.7,257.0 L132.6,257.4 L133.5,257.7 L134.5,258.1 L135.4,258.4 L136.4,258.8 L137.3,259.1 L138.2,259.4 L139.1,259.8 L140.0,260.2 L140.9,260.5 L141.8,260.8 L142.8,261.2 L143.7,261.5 L144.7,261.8 L145.8,262.0 L146.8,262.2 L147.8,262.4 L148.9,262.6 L150.0,262.8 L151.1,262.9 L152.2,263.0 L153.4,263.1 L154.5,263.2 L155.7,263.2 L156.9,263.2 L158.0,263.2 L159.2,263.1 L160.3,263.0 L161.5,262.8 L162.6,262.5 L163.8,262.3 L164.9,261.9 L166.1,261.6 L167.3,261.2 L168.4,260.7 L169.5,260.3 L170.6,259.9 L171.6,259.4 L172.7,259.0 L173.6,258.5 L174.6,258.0 L175.5,257.5 L176.5,256.9 L177.4,256.3 L178.3,255.7 L179.2,255.1 L180.0,254.5 L180.8,254.0 L181.5,253.4 L182.1,253.0 L182.6,252.6 L183.0,252.2 L183.0,252.2 L182.5,252.4 L181.9,252.7 L181.3,253.1 L180.5,253.6 L179.7,254.1 L178.8,254.6 L177.9,255.1 L177.0,255.6 L176.1,256.1 L175.1,256.6 L174.1,257.1 L173.2,257.5 L172.2,257.9 L171.2,258.3 L170.1,258.7 L169.0,259.0 L167.9,259.4 L166.8,259.8 L165.7,260.1 L164.5,260.4 L163.4,260.7 L162.3,260.9 L161.2,261.1 L160.1,261.2 L159.0,261.3 L157.9,261.4 L156.9,261.4 L155.8,261.3 L154.7,261.3 L153.6,261.2 L152.5,261.0 L151.4,260.9 L150.3,260.7 L149.3,260.6 L148.2,260.4 L147.2,260.2 L146.2,260.0 L145.3,259.7 L144.4,259.4 L143.5,259.1 L142.6,258.8 L141.7,258.5 L140.8,258.1 L139.9,257.8 L139.0,257.4 L138.0,257.0 L137.1,256.7 L136.2,256.4 L135.2,256.0 L134.3,255.7 L133.4,255.3 L132.5,255.0 L131.5,254.6 L130.6,254.2 L129.6,253.9 L128.7,253.5 L127.7,253.2 L126.8,252.9 L125.8,252.7 L124.8,252.5 L123.9,252.3 L122.9,252.2 L122.0,252.0 L121.1,251.9 L120.2,251.8 L119.3,251.8 L118.4,251.8 L117.4,251.8 L116.4,251.8 L115.5,251.9 L114.4,252.0 L113.4,252.2 L112.2,252.4 L111.1,252.7 L109.9,253.0 L108.6,253.3 L107.4,253.7 L106.1,254.1 L104.8,254.6 L103.6,255.0 L102.4,255.4 L101.2,255.9 L100.1,256.3 L99.0,256.8 L98.0,257.2 L96.9,257.7 L95.8,258.2 L94.8,258.7 L93.8,259.2 L92.9,259.7 L91.9,260.2 L91.1,260.7 L90.3,261.1 L89.6,261.5 L89.1,261.9 L88.6,262.2 Z" fill="#ffffff"/>
<path d="M88.6,295.0 L89.1,294.8 L89.7,294.5 L90.4,294.2 L91.3,293.8 L92.1,293.4 L93.1,293.0 L94.1,292.5 L95.1,292.1 L96.2,291.7 L97.2,291.3 L98.3,291.0 L99.4,290.7 L100.5,290.4 L101.7,290.1 L102.8,289.6 L104.1,289.4 L105.2,288.5 L106.6,288.5 L107.9,288.4 L109.1,288.0 L110.4,287.8 L111.4,287.2 L112.6,287.2 L113.7,286.9 L114.7,287.0 L115.6,287.0 L116.5,286.6 L117.5,286.7 L118.3,286.8 L119.2,287.2 L120.0,287.2 L120.9,287.0 L121.7,287.5 L122.6,287.3 L123.4,287.7 L124.3,287.6 L125.2,287.8 L126.0,288.5 L127.0,288.4 L127.8,288.7 L128.6,289.5 L129.5,289.8 L130.6,289.8 L131.3,290.6 L132.4,290.7 L133.3,291.2 L134.3,291.3 L135.1,292.1 L136.1,292.2 L136.9,292.7 L137.9,293.0 L138.9,293.0 L139.8,293.4 L140.8,293.7 L141.7,294.0 L142.7,294.3 L143.6,294.7 L144.6,295.1 L145.7,295.0 L146.7,295.6 L147.8,295.6 L148.9,295.7 L149.9,296.2 L151.1,296.1 L152.2,296.1 L153.4,296.3 L154.5,296.5 L155.7,296.1 L156.9,296.6 L158.0,296.0 L159.2,296.3 L160.4,296.2 L161.4,295.5 L162.7,295.7 L163.8,295.1 L165.0,294.8 L166.0,294.1 L167.2,293.7 L168.3,293.4 L169.6,293.3 L170.5,292.4 L171.7,292.3 L172.7,291.9 L173.7,291.4 L174.5,290.7 L175.5,290.2 L176.4,289.6 L177.3,289.0 L178.2,288.4 L179.1,287.8 L179.9,287.2 L180.7,286.6 L181.4,286.1 L182.0,285.7 L182.6,285.3 L183.0,285.0 L183.0,285.0 L182.5,285.3 L182.0,285.6 L181.3,286.0 L180.6,286.5 L179.8,287.0 L178.9,287.5 L178.0,288.0 L177.1,288.6 L176.1,289.1 L175.2,289.6 L174.2,290.0 L173.1,290.2 L172.1,290.5 L171.2,291.0 L170.2,291.7 L168.9,291.6 L168.0,292.4 L166.9,292.8 L165.7,293.1 L164.5,293.1 L163.4,293.4 L162.2,293.4 L161.2,294.0 L160.0,293.6 L159.0,293.7 L157.9,294.2 L156.8,293.6 L155.8,294.1 L154.7,293.6 L153.6,293.6 L152.5,293.5 L151.4,293.3 L150.4,292.9 L149.3,293.0 L148.3,292.8 L147.3,292.4 L146.3,292.5 L145.5,291.9 L144.5,291.8 L143.6,291.6 L142.7,291.3 L141.8,290.9 L140.9,290.5 L140.0,290.1 L139.3,289.4 L138.3,289.0 L137.3,288.8 L136.5,288.3 L135.4,288.4 L134.6,287.8 L133.6,287.6 L132.8,287.0 L131.7,287.0 L130.9,286.3 L129.9,285.9 L128.8,286.0 L127.8,285.7 L127.0,285.0 L125.8,285.3 L124.9,285.0 L124.0,284.5 L123.0,284.7 L122.1,284.2 L121.1,284.5 L120.3,284.1 L119.3,283.9 L118.4,284.3 L117.4,284.4 L116.4,284.6 L115.4,284.4 L114.4,284.5 L113.3,284.9 L112.2,285.0 L111.1,285.5 L109.8,285.4 L108.6,285.9 L107.3,286.2 L106.1,286.9 L104.9,287.6 L103.5,287.6 L102.3,288.1 L101.1,288.5 L100.0,289.0 L99.0,289.5 L98.0,290.0 L97.0,290.6 L95.9,291.1 L94.9,291.6 L93.9,292.1 L92.9,292.7 L92.0,293.2 L91.2,293.6 L90.4,294.1 L89.7,294.4 L89.1,294.7 L88.6,295.0 Z" fill="#ffffff"/>
<path d="M88.6,328.1 L89.1,327.9 L89.7,327.6 L90.4,327.2 L91.2,326.8 L92.1,326.4 L93.0,325.9 L94.0,325.5 L95.0,325.0 L96.1,324.6 L97.1,324.1 L98.2,323.8 L99.3,323.5 L100.3,323.0 L101.5,322.6 L102.6,322.1 L103.9,321.9 L105.2,321.5 L106.5,321.2 L107.7,320.8 L109.0,320.6 L110.2,320.2 L111.4,320.1 L112.5,319.9 L113.6,319.7 L114.6,319.6 L115.6,319.6 L116.5,319.4 L117.4,319.5 L118.3,319.7 L119.2,319.6 L120.0,319.8 L120.9,319.9 L121.7,320.1 L122.6,320.1 L123.5,320.2 L124.4,320.6 L125.2,320.8 L126.1,321.0 L127.1,321.2 L127.9,321.5 L128.8,322.0 L129.8,322.3 L130.6,322.8 L131.6,323.1 L132.5,323.4 L133.4,323.9 L134.4,324.2 L135.3,324.7 L136.2,325.0 L137.1,325.3 L138.0,325.7 L138.9,326.0 L139.8,326.4 L140.7,326.8 L141.8,326.9 L142.7,327.3 L143.6,327.7 L144.7,327.9 L145.7,328.2 L146.8,328.3 L147.8,328.7 L148.9,328.7 L150.0,328.8 L151.1,329.0 L152.2,329.0 L153.4,329.1 L154.5,329.2 L155.7,329.1 L156.9,329.1 L158.0,329.2 L159.2,329.0 L160.3,328.7 L161.5,328.7 L162.6,328.2 L163.7,328.0 L164.9,327.8 L166.1,327.3 L167.2,326.8 L168.3,326.4 L169.4,325.9 L170.4,325.4 L171.6,325.1 L172.5,324.4 L173.5,324.1 L174.4,323.6 L175.4,323.1 L176.3,322.5 L177.3,322.0 L178.2,321.4 L179.0,320.8 L179.9,320.2 L180.7,319.7 L181.4,319.2 L182.0,318.8 L182.6,318.4 L183.0,318.1 L183.0,318.1 L182.5,318.4 L182.0,318.7 L181.3,319.2 L180.6,319.6 L179.8,320.2 L179.0,320.7 L178.1,321.3 L177.2,321.8 L176.2,322.3 L175.3,322.8 L174.3,323.3 L173.3,323.7 L172.4,324.2 L171.2,324.3 L170.3,325.0 L169.1,325.3 L168.0,325.6 L166.9,326.0 L165.7,326.2 L164.5,326.4 L163.4,326.8 L162.3,327.1 L161.2,327.0 L160.1,327.3 L159.0,327.2 L157.9,327.1 L156.9,327.3 L155.8,327.3 L154.7,327.0 L153.6,327.0 L152.5,326.8 L151.4,326.6 L150.3,326.5 L149.3,326.2 L148.3,325.9 L147.2,325.9 L146.3,325.5 L145.4,325.4 L144.5,325.0 L143.5,324.8 L142.6,324.5 L141.8,323.9 L140.9,323.6 L140.0,323.3 L139.1,323.0 L138.1,322.7 L137.2,322.2 L136.3,321.9 L135.3,321.7 L134.4,321.3 L133.5,321.1 L132.6,320.6 L131.7,320.2 L130.6,320.0 L129.7,319.6 L128.7,319.4 L127.7,319.1 L126.8,318.7 L125.8,318.4 L124.8,318.2 L123.9,318.3 L122.9,318.1 L122.0,317.8 L121.1,317.8 L120.2,317.7 L119.3,317.8 L118.4,317.7 L117.4,317.8 L116.5,318.0 L115.5,317.9 L114.4,318.1 L113.4,318.3 L112.3,318.5 L111.1,318.7 L109.9,319.2 L108.7,319.5 L107.5,320.0 L106.2,320.3 L104.9,320.8 L103.7,321.2 L102.5,321.9 L101.3,322.2 L100.2,322.6 L99.1,322.9 L98.1,323.4 L97.1,323.9 L96.0,324.4 L95.0,324.9 L94.0,325.4 L93.0,325.9 L92.1,326.3 L91.2,326.8 L90.4,327.2 L89.7,327.5 L89.1,327.8 L88.6,328.1 Z" fill="#ffffff"/>
<!-- pen button icon -->
<path d="M80.5,108 L83,99.5 L90,93.5 L94.5,98 L88.5,105 Z M80.5,108 L86.5,102" stroke="#c8ccd6" stroke-width="1.2"/>
<path d="M90.5,92.5 L92.5,90.8 L96.8,95 L95,97" fill="#c8ccd6" stroke="#c8ccd6" stroke-width="1.5"/>
<!-- marker button icon -->
<path d="M177.5,108 L178,104.5 L183,97 L188.5,102.5 L181,107.5 Z" stroke-width="1.3"/>
<path d="M183.5,96.5 L188.3,91.5 L194,97.2 L189,102 Z" fill="#c4c4c4" stroke="#c4c4c4" stroke-width="1.3"/>
<!-- bottom bar icons -->
<rect x="83.5" y="358.5" width="11" height="11" rx="2" fill="#6a6a6a" stroke="#8c8c8c" stroke-width="1"/>
<rect x="81" y="356.3" width="11" height="11" rx="2" fill="#4e4e4e" stroke="#c4c4c4" stroke-width="1.2"/>
<path d="M83.5,361.5 L85.8,364 L90,358.8" stroke-width="1.2"/>
<rect x="199.5" y="360" width="12.5" height="10" rx="2" stroke-width="1.2"/>
<path d="M205.8,357.5 V365.5 M203,362.8 L205.8,365.6 L208.6,362.8" stroke-width="1.2"/>
<rect x="225.5" y="357.3" width="9.5" height="9.5" rx="2" stroke-width="1.2"/>
<rect x="229" y="360.5" width="10" height="10" rx="2" fill="#4e4e4e" stroke-width="1.2"/>
<path d="M234,362.5 V368.5 M231,365.5 H237" stroke-width="1.2"/>
<path d="M253.5,359.5 H264.5 M256.5,359.5 V357.5 H261.5 V359.5 M254.5,359.5 L255.5,370 H262.5 L263.5,359.5 M257.5,362 V368 M260.5,362 V368" stroke="#a8a8a8" stroke-width="1.1"/>
</svg>


<!-- TAB TEXTS -->
<div class="t" style="left:123.5px;top:386px;font-size:11px;letter-spacing:-0.5px;color:#d4d4d4;transform:scaleX(0.88);transform-origin:0 0">ツールプロパティ</div>
<div class="t" style="left:49.5px;top:72px;font-size:11px;letter-spacing:-1px;color:#d0d0d0">ツー</div>
<!-- TOOL PROPERTY CONTENT -->
<div class="a" style="left:76px;top:401.8px;width:97.7px;height:36px;background:#bcbcbc"></div>
<div class="a" style="left:173.7px;top:401.8px;width:90.3px;height:36px;background:#4e4e4e"></div>
<div class="a" style="left:75px;top:437.8px;width:197px;height:2.2px;background:#353535"></div>
<div class="a" style="left:77.3px;top:403px;width:32.4px;height:14.4px;border-radius:2px;background:#8a8a8a"></div>
<div class="t" style="left:77.5px;top:404.5px;font-size:11px;letter-spacing:-0.6px;color:#e4e4e4">Gペン</div>
<div class="t" style="left:90.5px;top:442.5px;font-size:11px;letter-spacing:-1.4px;color:#d8d8d8">ブラシサイズ</div>
<div class="t" style="left:90px;top:468.5px;font-size:11px;letter-spacing:-0.8px;color:#d8d8d8">不透明度</div>
<div class="t" style="left:91px;top:498.5px;font-size:11px;letter-spacing:-1.1px;color:#d8d8d8">アンチエイリアス</div>
<div class="t" style="left:90.5px;top:519.5px;font-size:11px;letter-spacing:-1.2px;color:#d8d8d8">手ブレ補正</div>
<div class="t" style="left:107.5px;top:549.5px;font-size:11px;letter-spacing:-1.3px;color:#d8d8d8">速度による手ブレ補正</div>
<div class="t" style="right:788.5px;top:446.5px;font-size:12px;letter-spacing:-0.3px;color:#dcdcdc">845.3</div>
<div class="t" style="right:788.5px;top:472.5px;font-size:12px;letter-spacing:-0.3px;color:#dcdcdc">100</div>
<div class="t" style="right:788.5px;top:523px;font-size:12px;color:#dcdcdc">6</div>
<!-- bars -->
<div class="a" style="left:111px;top:455.3px;width:82.5px;height:7.5px;border-right:1px solid #6a6666;border-bottom:1px solid #6a6666"></div>
<div class="a" style="left:111px;top:455.3px;width:75px;height:7.5px;background:#575757"></div>
<div class="a" style="left:111px;top:480.8px;width:82.5px;height:7.8px;border-radius:1px;background:#575757"></div>
<div class="a" style="left:111px;top:532px;width:82.5px;height:7.5px;border-right:1px solid #6a6666;border-bottom:1px solid #6a6666"></div>
<div class="a" style="left:111px;top:532px;width:42px;height:7.5px;background:#575757"></div>
<!-- buttons -->
<div class="a" style="left:248.5px;top:441.8px;width:14.3px;height:22.5px;border-radius:3px;background:#4d4d4d;border:1px solid #555"></div>
<div class="a" style="left:248.5px;top:467.6px;width:14.3px;height:22.4px;border-radius:3px;background:#4d4d4d;border:1px solid #555"></div>
<!-- separators -->
<div class="a" style="left:85px;top:465.3px;width:177.5px;height:1.2px;background:#585858"></div>
<div class="a" style="left:85px;top:490.6px;width:177.5px;height:1.2px;background:#585858"></div>
<div class="a" style="left:85px;top:516.6px;width:177.5px;height:1.2px;background:#585858"></div>
<div class="a" style="left:85px;top:568.2px;width:177.5px;height:1.2px;background:#585858"></div>
<!-- scrollbar -->
<div class="a" style="left:266.5px;top:442px;width:3.5px;height:104.5px;border-radius:2px;background:#555"></div>
<!-- antialias group -->
<div class="a" style="left:174px;top:493px;width:88.4px;height:22.7px;border-radius:3px;background:#4d4d4d;border:1px solid #575757"></div>
<div class="a" style="left:210.7px;top:493.5px;width:20.3px;height:22px;background:#6d87bf"></div>
<svg class="a" style="left:0;top:0" width="1024" height="768" viewBox="0 0 1024 768" fill="none" stroke="#c4c4c4" stroke-width="1.2" stroke-linecap="round" stroke-linejoin="round">
<!-- tab icons -->
<path d="M82.5,385 H89 M82.5,387.8 H89 M82.5,390.6 H89" stroke="#8e8e92" stroke-width="0.9"/>
<path d="M102,389.5 H117.5 M102,394.5 H117.5" stroke-width="1.2"/>
<circle cx="108" cy="389.5" r="1.6" fill="#c4c4c4" stroke="none"/>
<circle cx="112.5" cy="394.5" r="1.6" fill="#c4c4c4" stroke="none"/>
<path d="M207,396 C206,392 208,389.5 211,389.5 C212,387.5 215,387 217,388.5 C219.5,389 220.5,392 220,394.5 M209,393.5 H219 M210.5,391.5 L208.5,393.5 L210.5,395.5 M217.5,391.5 L219.5,393.5 L217.5,395.5" stroke="#8a8a8a" stroke-width="1"/>
<!-- red stroke -->
<path d="M95.3,428.3 C99.4,426.1 110.9,418.6 120.0,415.0 C129.1,411.4 141.0,406.8 150.0,406.5 C159.0,406.2 165.4,410.9 173.8,413.5 C182.1,416.1 191.5,421.6 200.0,422.3 C208.5,423.0 216.7,419.3 225.0,417.5 C233.3,415.7 245.6,412.5 249.7,411.5 L249.7,411.5 C245.6,414.2 233.3,424.4 225.0,428.0 C216.7,431.6 208.5,433.4 200.0,433.2 C191.5,433.0 180.4,428.8 173.8,426.8 C167.1,424.8 164.3,422.3 160.0,421.0 C155.7,419.7 154.7,418.7 148.0,419.0 C141.3,419.3 128.8,421.3 120.0,422.9 C111.2,424.4 99.4,427.4 95.3,428.3 Z" fill="#b05757" stroke="none"/>
<!-- lock -->
<path d="M251,424 V422.5 C251,419.5 256.5,419.5 256.5,422.5" stroke="#d0d0d0" stroke-width="1.3"/>
<rect x="253" y="424.5" width="8.5" height="6" rx="1" fill="#d0d0d0" stroke="none"/>
<!-- spinners -->
<path d="M237.3,452.5 L241,448.8 L244.7,452.5 M237.3,456.5 L241,460.2 L244.7,456.5" stroke-width="1"/>
<path d="M237.3,478 L241,474.3 L244.7,478 M237.3,482 L241,485.7 L244.7,482" stroke-width="1"/>
<path d="M237.3,528.5 L241,524.8 L244.7,528.5 M237.3,532.5 L241,536.2 L244.7,532.5" stroke-width="1"/>
<path d="M252.5,500 L256,496.3 L259.5,500 M252.5,508.5 L256,512.2 L259.5,508.5" stroke-width="1"/>
<!-- button icons -->
<path d="M252.3,448 L255.7,451.5 L259,448 M252.3,452 L255.7,455.5 L259,452 M252.3,456 L255.7,459.5 L259,456" stroke-width="1.1"/>
<rect x="251.5" y="474" width="8.5" height="8.5" rx="2.5" stroke-width="1.2"/>
<path d="M252.5,481.5 L259,475" stroke-width="1.2"/>
<!-- antialias icons -->
<path d="M179.5,501 H182 V498.5 H186.5 V501 H189 V508 H186.5 V510.5 H182 V508 H179.5 Z M177.5,503 H191 V506 H177.5 Z" fill="#c4c4c4" stroke="none"/>
<circle cx="201.2" cy="504.3" r="6" fill="#c4c4c4" stroke="none"/>
<circle cx="220.8" cy="504.3" r="6.2" fill="#b8bcc8" stroke="none"/>
<circle cx="220.8" cy="504.3" r="5.2" fill="#c0c0c0" stroke="none"/>
<defs><radialGradient id="rg"><stop offset="0.45" stop-color="#c0c0c0"/><stop offset="1" stop-color="#4d4d4d"/></radialGradient></defs>
<circle cx="240.3" cy="504.3" r="7" fill="url(#rg)" stroke="none"/>
<!-- checkbox row -->
<rect x="79.5" y="550" width="10.5" height="10.5" rx="2" fill="#4d4d4d" stroke="#666" stroke-width="1"/>
<path d="M82,555.2 H87.5 M84.75,552.5 V558" stroke-width="1.1"/>
<rect x="91.5" y="548.5" width="13" height="13.5" rx="2" fill="#4d4d4d" stroke="#5c5c5c" stroke-width="1"/>
<path d="M93.8,555.5 L96.8,559 L102.5,551.2" stroke="#e0e0e0" stroke-width="1.6"/>
<!-- bottom bar icons -->
<path d="M232.2,574.6 A6.6,6.6 0 1 1 225.9,583.2" stroke-width="1.1"/>
<path d="M225.7,581.5 A6.6,6.6 0 0 1 231,574.7" stroke-width="1.1" stroke-dasharray="0.8 1.6"/>
<path d="M232.2,574.8 V581" stroke-width="1.1"/>
<circle cx="232.2" cy="581.2" r="1.9" fill="#c4c4c4" stroke="none"/>
<g transform="translate(254.5,578) rotate(45)">
<path d="M-4.2,-2.2 A4.8,4.8 0 1 0 4.2,-2.2 M4.2,-2.2 V-4.3 A4.8,4.8 0 0 1 -4.2,-4.3 V-2.2" stroke="none"/>
</g>
<path d="M251.2,574.2 C249.8,575.8 249.6,578.6 251.3,580.5 C253.2,582.4 255.8,582.3 257.3,581.2 L262.3,586.3 C263,587 264.3,587 264.6,586.2 C265.2,585.6 265.2,584.5 264.4,583.9 L259.4,578.9 C260.5,577.4 260.5,574.8 258.6,572.9 C256.8,571.3 254,571.2 252.4,572.6 L255.5,575.8 L254.5,577.8 L252.5,577.3 Z" stroke-width="1.1"/>
</svg>


<!-- BRUSH SIZE PANEL -->
<div class="t" style="left:49.5px;top:553px;font-size:11px;letter-spacing:-1px;color:#d0d0d0">ツー</div>
<div class="a" style="left:1px;top:564px;width:72px;height:204px;background:#4e4e4e"></div>
<div class="a" style="left:5.65px;top:570.6px;width:26.2px;height:26.2px;border-radius:50%;background:#333436"></div>
<div class="a" style="left:42px;top:570.6px;width:26.2px;height:26.2px;border-radius:50%;background:#b05a5a"></div>
<div class="t" style="left:5px;top:574px;width:28px;text-align:center;font-size:10.5px;letter-spacing:-0.3px;color:#e8e8e8">845.3</div>
<div class="t" style="left:5px;top:585.5px;width:28px;text-align:center;font-size:10.5px;color:#e8e8e8">px</div>
<div class="t" style="left:41px;top:574px;width:28px;text-align:center;font-size:10.5px;letter-spacing:-0.3px;color:#f0f0f0">100</div>
<div class="t" style="left:41px;top:585px;width:28px;text-align:center;font-size:10.5px;color:#f0f0f0">%</div>
<div class="a" style="left:16.3px;top:621px;width:5.6px;height:99.5px;border-radius:3px;background:#b8b8b8"></div>
<div class="a" style="left:9.35px;top:611.8px;width:18.8px;height:18.8px;border-radius:50%;background:#bdbdbd"></div>
<svg class="a" style="left:0;top:0" width="1024" height="768">
<defs><linearGradient id="sg" x1="0" y1="0" x2="0" y2="1"><stop offset="0" stop-color="#111"/><stop offset="1" stop-color="#fff"/></linearGradient>
<linearGradient id="sg2" x1="0" y1="0" x2="0" y2="1"><stop offset="0" stop-color="#000"/><stop offset="1" stop-color="#8a8a8a"/></linearGradient>
<clipPath id="tc"><rect x="52" y="612" width="6" height="108.5" rx="3"/></clipPath></defs>
<g clip-path="url(#tc)"><rect x="52" y="612" width="6" height="108.5" fill="url(#sg)"/><g fill="url(#sg2)"><rect x="54" y="612" width="2" height="2"/><rect x="52" y="614" width="2" height="2"/><rect x="56" y="614" width="2" height="2"/><rect x="54" y="616" width="2" height="2"/><rect x="52" y="618" width="2" height="2"/><rect x="56" y="618" width="2" height="2"/><rect x="54" y="620" width="2" height="2"/><rect x="52" y="622" width="2" height="2"/><rect x="56" y="622" width="2" height="2"/><rect x="54" y="624" width="2" height="2"/><rect x="52" y="626" width="2" height="2"/><rect x="56" y="626" width="2" height="2"/><rect x="54" y="628" width="2" height="2"/><rect x="52" y="630" width="2" height="2"/><rect x="56" y="630" width="2" height="2"/><rect x="54" y="632" width="2" height="2"/><rect x="52" y="634" width="2" height="2"/><rect x="56" y="634" width="2" height="2"/><rect x="54" y="636" width="2" height="2"/><rect x="52" y="638" width="2" height="2"/><rect x="56" y="638" width="2" height="2"/><rect x="54" y="640" width="2" height="2"/><rect x="52" y="642" width="2" height="2"/><rect x="56" y="642" width="2" height="2"/><rect x="54" y="644" width="2" height="2"/><rect x="52" y="646" width="2" height="2"/><rect x="56" y="646" width="2" height="2"/><rect x="54" y="648" width="2" height="2"/><rect x="52" y="650" width="2" height="2"/><rect x="56" y="650" width="2" height="2"/><rect x="54" y="652" width="2" height="2"/><rect x="52" y="654" width="2" height="2"/><rect x="56" y="654" width="2" height="2"/><rect x="54" y="656" width="2" height="2"/><rect x="52" y="658" width="2" height="2"/><rect x="56" y="658" width="2" height="2"/><rect x="54" y="660" width="2" height="2"/><rect x="52" y="662" width="2" height="2"/><rect x="56" y="662" width="2" height="2"/><rect x="54" y="664" width="2" height="2"/><rect x="52" y="666" width="2" height="2"/><rect x="56" y="666" width="2" height="2"/><rect x="54" y="668" width="2" height="2"/><rect x="52" y="670" width="2" height="2"/><rect x="56" y="670" width="2" height="2"/><rect x="54" y="672" width="2" height="2"/><rect x="52" y="674" width="2" height="2"/><rect x="56" y="674" width="2" height="2"/><rect x="54" y="676" width="2" height="2"/><rect x="52" y="678" width="2" height="2"/><rect x="56" y="678" width="2" height="2"/><rect x="54" y="680" width="2" height="2"/><rect x="52" y="682" width="2" height="2"/><rect x="56" y="682" width="2" height="2"/><rect x="54" y="684" width="2" height="2"/><rect x="52" y="686" width="2" height="2"/><rect x="56" y="686" width="2" height="2"/><rect x="54" y="688" width="2" height="2"/><rect x="52" y="690" width="2" height="2"/><rect x="56" y="690" width="2" height="2"/><rect x="54" y="692" width="2" height="2"/><rect x="52" y="694" width="2" height="2"/><rect x="56" y="694" width="2" height="2"/><rect x="54" y="696" width="2" height="2"/><rect x="52" y="698" width="2" height="2"/><rect x="56" y="698" width="2" height="2"/><rect x="54" y="700" width="2" height="2"/><rect x="52" y="702" width="2" height="2"/><rect x="56" y="702" width="2" height="2"/><rect x="54" y="704" width="2" height="2"/><rect x="52" y="706" width="2" height="2"/><rect x="56" y="706" width="2" height="2"/><rect x="54" y="708" width="2" height="2"/><rect x="52" y="710" width="2" height="2"/><rect x="56" y="710" width="2" height="2"/><rect x="54" y="712" width="2" height="2"/><rect x="52" y="714" width="2" height="2"/><rect x="56" y="714" width="2" height="2"/><rect x="54" y="716" width="2" height="2"/><rect x="52" y="718" width="2" height="2"/><rect x="56" y="718" width="2" height="2"/><rect x="54" y="720" width="2" height="2"/></g></g>
<path d="M8.8,553 H15.2 M8.8,555.4 H15.2 M8.8,557.8 H15.2" stroke="#8e8e92" stroke-width="0.9"/>
<path d="M33.4,552.5 V566.5 M38.7,552.5 V566.5" stroke="#c4c4c4" stroke-width="1.3" stroke-linecap="round"/>
<rect x="31.9" y="558.5" width="3" height="3.5" rx="1" fill="#c4c4c4"/>
<rect x="37.2" y="554.5" width="3" height="3.5" rx="1" fill="#c4c4c4"/>
</svg>
<div class="a" style="left:45.7px;top:601.8px;width:18.8px;height:18.8px;border-radius:50%;background:#bdbdbd"></div>

<!-- COLOR PANEL -->
<div class="a" style="left:96.4px;top:600.8px;width:89.9px;height:13px;background:#4e4e4e"></div>
<div class="a" style="left:187.2px;top:601.4px;width:26.4px;height:12.2px;background:#464646"></div>
<div class="a" style="left:215.5px;top:601.4px;width:26.4px;height:12.2px;background:#464646"></div>
<div class="a" style="left:243.9px;top:601.4px;width:26.3px;height:12.2px;background:#464646"></div>
<div class="t" style="left:123.75px;top:604px;font-size:11px;letter-spacing:-1.3px;color:#d4d4d4;width:59px;overflow:hidden">カラーサークル</div>
<div class="a" style="left:75px;top:613.5px;width:197px;height:154.5px;background:#4e4e4e"></div>
<div class="a" style="left:109.3px;top:621px;width:128px;height:128px;border-radius:50%;background:conic-gradient(from 295.6deg,#ed2012 0.0deg 7.5deg,#ed3b12 7.5deg 15.0deg,#ed5712 15.0deg 22.5deg,#ed7212 22.5deg 30.0deg,#ed8d12 30.0deg 37.5deg,#eda812 37.5deg 45.0deg,#edc412 45.0deg 52.5deg,#eddf12 52.5deg 60.0deg,#dfed12 60.0deg 67.5deg,#c4ed12 67.5deg 75.0deg,#a8ed12 75.0deg 82.5deg,#8ded12 82.5deg 90.0deg,#72ed12 90.0deg 97.5deg,#57ed12 97.5deg 105.0deg,#3bed12 105.0deg 112.5deg,#20ed12 112.5deg 120.0deg,#12ed20 120.0deg 127.5deg,#12ed3b 127.5deg 135.0deg,#12ed57 135.0deg 142.5deg,#12ed72 142.5deg 150.0deg,#12ed8d 150.0deg 157.5deg,#12eda8 157.5deg 165.0deg,#12edc4 165.0deg 172.5deg,#12eddf 172.5deg 180.0deg,#12dfed 180.0deg 187.5deg,#12c4ed 187.5deg 195.0deg,#12a8ed 195.0deg 202.5deg,#128ded 202.5deg 210.0deg,#1272ed 210.0deg 217.5deg,#1257ed 217.5deg 225.0deg,#123bed 225.0deg 232.5deg,#1220ed 232.5deg 240.0deg,#2012ed 240.0deg 247.5deg,#3b12ed 247.5deg 255.0deg,#5712ed 255.0deg 262.5deg,#7212ed 262.5deg 270.0deg,#8d12ed 270.0deg 277.5deg,#a812ed 277.5deg 285.0deg,#c412ed 285.0deg 292.5deg,#df12ed 292.5deg 300.0deg,#ed12df 300.0deg 307.5deg,#ed12c4 307.5deg 315.0deg,#ed12a8 315.0deg 322.5deg,#ed128d 322.5deg 330.0deg,#ed1272 330.0deg 337.5deg,#ed1257 337.5deg 345.0deg,#ed123b 345.0deg 352.5deg,#ed1220 352.5deg 360.0deg)"></div>
<div class="a" style="left:119.7px;top:631.4px;width:107.2px;height:107.2px;border-radius:50%;background:#4e4e4e"></div>
<div class="a" style="left:140px;top:651px;width:67.6px;height:67.6px;background:linear-gradient(to top,#000,rgba(0,0,0,0)),linear-gradient(to right,#fff,#f00)"></div>
<svg class="a" style="left:0;top:0" width="1024" height="768" fill="none" stroke="#c4c4c4" stroke-linecap="round" stroke-linejoin="round">
<path d="M82.2,602.5 H89.2 M82.2,605.7 H89.2 M82.2,608.9 H89.2" stroke="#8e8e92" stroke-width="0.9"/>
<circle cx="109.5" cy="610" r="6.3" stroke-width="1.1"/>
<rect x="106.8" y="607.3" width="5.4" height="5.4" rx="0.8" fill="#c4c4c4" stroke="none"/>
<g stroke="#7c7c7c" stroke-width="1">
<rect x="194" y="604" width="13" height="9" rx="1"/><path d="M194,608 H207 M198,604 V608 M200,610 V613"/>
<rect x="222" y="604" width="13" height="9" rx="1"/><path d="M222,606.5 H235 M222,610.5 H235 M225,604 V613 M232,604 V613"/>
<path d="M250,613 L253.5,605.5 L256,609.5 L259,604.5 L263.5,613 Z" fill="#6a6a6a"/>
</g>
<circle cx="174" cy="672.3" r="4.2" fill="#ad5555" stroke="#ffffff" stroke-width="1.3"/>
<circle cx="174" cy="672.3" r="5.2" stroke="#333" stroke-width="0.7"/>
<g transform="translate(122,656) rotate(30)">
<rect x="-4.5" y="-3.9" width="9" height="7.8" fill="#ff0000" stroke="#111" stroke-width="2.8"/>
<rect x="-4.5" y="-3.9" width="9" height="7.8" fill="#ee0000" stroke="#ffffff" stroke-width="1.4"/>
</g>
<!-- swatches -->
<rect x="88.1" y="729.1" width="20.4" height="20.4" rx="3" fill="#4e4e4e" stroke="#5c5858" stroke-width="1"/>
<rect x="90.6" y="731" width="16.2" height="16.5" rx="1" fill="#fff" stroke="none"/>
<rect x="76.5" y="718.8" width="20" height="20" rx="3" fill="#4e4e4e" stroke="#7d9bd6" stroke-width="2"/>
<rect x="77.8" y="720" width="17.4" height="17.5" rx="1" fill="#ad5555" stroke="none"/>
<rect x="76" y="752.5" width="33" height="10.5" rx="3" stroke="#5c5858" stroke-width="1"/>
<rect x="78" y="755" width="29" height="6" fill="#fff" stroke="none"/>
<g fill="#6e6e6e" stroke="none"><rect x="80.9" y="755.0" width="2.9" height="3"/><rect x="86.7" y="755.0" width="2.9" height="3"/><rect x="92.5" y="755.0" width="2.9" height="3"/><rect x="98.3" y="755.0" width="2.9" height="3"/><rect x="104.1" y="755.0" width="2.9" height="3"/><rect x="78.0" y="758.0" width="2.9" height="3"/><rect x="83.8" y="758.0" width="2.9" height="3"/><rect x="89.6" y="758.0" width="2.9" height="3"/><rect x="95.4" y="758.0" width="2.9" height="3"/><rect x="101.2" y="758.0" width="2.9" height="3"/></g>
<!-- HSV boxes -->
<rect x="148.2" y="754" width="7.8" height="7.2" rx="1" fill="#bdbdbd" stroke="none"/>
<rect x="178.4" y="754" width="7.9" height="7.2" rx="1" fill="#bdbdbd" stroke="none"/>
<rect x="208.7" y="754" width="7.4" height="7.2" rx="1" fill="#bdbdbd" stroke="none"/>
<path d="M150.3,755.5 V759.8 M153.9,755.5 V759.8 M150.3,757.6 H153.9" stroke="#4e4e4e" stroke-width="1.1"/>
<path d="M184,756 C183.5,755 180.5,755 180.5,756.5 C180.5,758 184.2,757.5 184.2,759 C184.2,760.5 181,760.5 180.5,759.5" stroke="#4e4e4e" stroke-width="1"/>
<path d="M210.3,755.5 L212.4,759.8 L214.5,755.5" stroke="#4e4e4e" stroke-width="1.1"/>
<!-- play -->
<circle cx="256" cy="752" r="6.6" stroke-width="1.1"/>
<path d="M254,748.3 L259.5,752 L254,755.7 Z" stroke-width="1.1"/>
</svg>
<div class="t" style="left:157.5px;top:751.5px;font-size:11.5px;letter-spacing:-0.4px;color:#d4d4d4">359</div>
<div class="t" style="left:193px;top:751.5px;font-size:11.5px;letter-spacing:-0.4px;color:#d4d4d4">51</div>
<div class="t" style="left:222px;top:751.5px;font-size:11.5px;letter-spacing:-0.4px;color:#d4d4d4">68</div>


<div class="a" style="left:0;top:767px;width:274px;height:1px;background:#38383c"></div>
<!-- RIGHT STRIP -->
<div class="a" style="left:986px;top:63px;width:34.4px;height:35px;background:#4e4e4e"></div>
<div class="a" style="left:986px;top:102.8px;width:34.4px;height:35px;background:#4e4e4e"></div>
<div class="a" style="left:986px;top:142.7px;width:34.4px;height:67px;background:#4e4e4e"></div>
<div class="a" style="left:965.4px;top:696.7px;width:47.2px;height:47.2px;border-radius:50%;background:#3c3c3e;border:1.2px solid #b4b4b4"></div>
<svg class="a" style="left:0;top:0" width="1024" height="768" fill="none" stroke="#c4c4c4" stroke-width="1.3" stroke-linecap="round" stroke-linejoin="round">
<path d="M1008.5,83.5 A7,7 0 1 0 1004,86.8" stroke-width="1.4"/>
<path d="M998.5,76.5 L1010.5,88 M998.5,76.5 V81 M998.5,76.5 H1003" stroke-width="1.6"/>
<path d="M995.2,127.5 V114 H1000.5 L1002,115.5 H1011.5 V127.5 Z M995.2,117 H1011.5" stroke-width="1.2"/>
<g stroke="#9a9a9a" stroke-width="0.8"><path d="M997.5,119 L1001,125 M1000.5,118.5 L1004.5,125.5 M1004,118.5 L1008,125.5 M1007.5,118.5 L1010,123 M1009.5,118.5 L1003.5,126 M1006,118.5 L1000,126 M1002.5,118.5 L997.5,125"/></g>
<!-- layers+shapes -->
<path d="M1002.5,152 L1009,156 L1002.5,160 L996,156 Z" stroke-width="1.1"/>
<path d="M996,159 L1002.5,163 L1005,161.5 M996,162 L1002.5,166 L1004,165 M996,165 L1002.5,169 L1004,168" stroke-width="1.1"/>
<circle cx="1006.5" cy="163.5" r="1.8" stroke-width="0.9"/>
<circle cx="1011" cy="163.5" r="2" fill="#c4c4c4" stroke="none"/>
<path d="M1005,167 L1008,170 M1008,167 L1005,170" stroke-width="0.9"/>
<rect x="1009.3" y="166.8" width="3.5" height="3.5" stroke-width="0.9"/>
<!-- layers -->
<path d="M1003,184.5 L1010,188.8 L1003,193 L996,188.8 Z" stroke-width="1.1"/>
<path d="M996,192 L1003,196.3 L1010,192 M996,195.3 L1003,199.6 L1010,195.3" stroke-width="1.1"/>
<!-- rotate button icon -->
<rect x="983.5" y="712.6" width="11" height="16.4" rx="1.5" stroke-width="1.2"/>
<path d="M985.5,727 L992.5,714.6 V727 Z" fill="#c4c4c4" stroke="none"/>
<path d="M980,716.5 V713.5 C980,708.5 983,706.5 987,706.5 H991 C995,706.5 998,708.5 998,713.5 V715" stroke-width="1.3"/>
<path d="M998,724 V727 C998,732 995,734 991,734 H987 C983,734 980,732 980,727 V725.5" stroke-width="1.3"/>
<path d="M976.8,716 H983.2 L980,720 Z" fill="#c4c4c4" stroke-width="1"/>
<path d="M994.8,724.5 H1001.2 L998,720.5 Z" fill="#c4c4c4" stroke-width="1"/>
</svg>

</body></html>
